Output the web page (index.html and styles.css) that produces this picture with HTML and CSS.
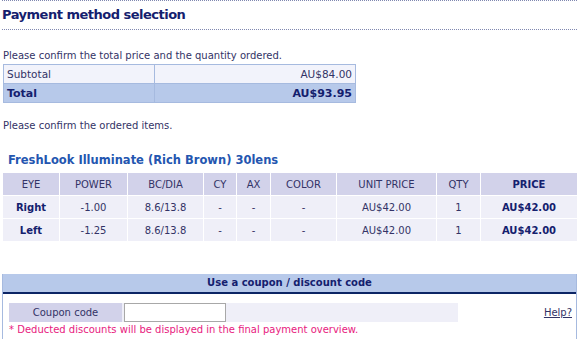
FILE: index.html
```html
<!DOCTYPE html>
<html lang="en">
<head>
    <meta charset="UTF-8">
    <title>Payment method selection</title>
    <link rel="stylesheet" href="styles.css">
</head>
<body>

    <h1 class="page-title">Payment method selection</h1>

    <p class="note">Please confirm the total price and the quantity ordered.</p>

    <table class="summary">
        <tr class="sub">
            <td class="label">Subtotal</td>
            <td class="amount">AU$84.00</td>
        </tr>
        <tr class="total">
            <td class="label">Total</td>
            <td class="amount">AU$93.95</td>
        </tr>
    </table>

    <p class="note second">Please confirm the ordered items.</p>

    <h2 class="product">FreshLook Illuminate (Rich Brown) 30lens</h2>

    <table class="items">
        <tr>
            <th class="c-eye">EYE</th>
            <th class="c-power">POWER</th>
            <th class="c-bc">BC/DIA</th>
            <th class="c-cy">CY</th>
            <th class="c-ax">AX</th>
            <th class="c-color">COLOR</th>
            <th class="c-unit">UNIT PRICE</th>
            <th class="c-qty">QTY</th>
            <th class="c-price strong">PRICE</th>
        </tr>
        <tr>
            <td class="strong">Right</td>
            <td>-1.00</td>
            <td>8.6/13.8</td>
            <td>-</td>
            <td>-</td>
            <td>-</td>
            <td>AU$42.00</td>
            <td>1</td>
            <td class="strong">AU$42.00</td>
        </tr>
        <tr>
            <td class="strong">Left</td>
            <td>-1.25</td>
            <td>8.6/13.8</td>
            <td>-</td>
            <td>-</td>
            <td>-</td>
            <td>AU$42.00</td>
            <td>1</td>
            <td class="strong">AU$42.00</td>
        </tr>
    </table>

    <div class="coupon">
        <div class="coupon-head">Use a coupon / discount code</div>
        <div class="coupon-body">
            <div class="coupon-row">
                <div class="coupon-label">Coupon code</div>
                <div class="coupon-field"><input type="text" class="coupon-input"></div>
                <div class="coupon-fill"></div>
                <a href="#" class="help">Help?</a>
            </div>
            <div class="coupon-note">* Deducted discounts will be displayed in the final payment overview.</div>
        </div>
    </div>

</body>
</html>
```

FILE: styles.css
```css
body {
    font-family: 'DejaVu Sans', Verdana, sans-serif;
    font-size: 10px;
    color: #333366;
    margin: 0;
    padding: 0 3px 0 2px;
    background: #ffffff;
}

.page-title {
    font-size: 13px;
    letter-spacing: -0.5px;
    font-weight: bold;
    color: #14206e;
    margin: 0;
    padding: 5px 0 5px 0;
    border-top: 1px dotted #8088b0;
    border-bottom: 1px dotted #8088b0;
    line-height: 18px;
}

.note {
    margin: 19px 0 1px 1px;
    line-height: 14px;
}

.note.second {
    margin-top: 16px;
}

.summary {
    border-collapse: collapse;
    width: 353px;
    margin-left: 1px;
}

.summary td {
    border: 1px solid #a6badf;
    height: 18px;
    padding: 0 3px;
    font-size: 11px;
}

.summary .label {
    width: 144px;
}

.summary .amount {
    text-align: right;
}

.summary .sub td {
    background: #f2f3fb;
    font-size: 10.5px;
}

.summary .total td {
    background: #b7c9ea;
    font-weight: bold;
    color: #14206e;
}

.product {
    font-size: 11.5px;
    font-weight: bold;
    color: #2456b0;
    margin: 19px 0 5px 6px;
    line-height: 16px;
}

.items {
    width: 576px;
    margin-left: 0;
    border-collapse: separate;
    border-spacing: 1px;
    margin-top: -1px;
}

.items th,
.items td {
    height: 22px;
    padding: 0;
    text-align: center;
    font-weight: normal;
}

.items th {
    background: #d2d2ea;
}

.items td {
    background: #efeff8;
}

.items .strong {
    font-weight: bold;
    color: #14206e;
}

.c-eye { width: 56px; }
.c-power { width: 67px; }
.c-bc { width: 75px; }
.c-cy { width: 32px; }
.c-ax { width: 33px; }
.c-color { width: 65px; }
.c-unit { width: 99px; }
.c-qty { width: 43px; }

.coupon {
    margin-top: 32px;
    width: 573px;
    margin-left: 0;
    border: 1px solid #a6badf;
    border-top: none;
}

.coupon-head {
    background: #b7c9ea;
    color: #14206e;
    font-weight: bold;
    text-align: center;
    line-height: 18px;
    border-bottom: 2px solid #0c2565;
}

.coupon-body {
    padding: 9px 4px 6px 6px;
}

.coupon-row {
    display: flex;
    align-items: stretch;
    height: 19px;
}

.coupon-label {
    width: 113px;
    background: #d2d2ea;
    text-align: center;
    line-height: 19px;
}

.coupon-field {
    background: #efeff8;
    padding-left: 2px;
}

.coupon-input {
    box-sizing: border-box;
    width: 102px;
    height: 19px;
    margin: 0;
    border: 1px solid #a8a8a8;
    background: #ffffff;
}

.coupon-fill {
    width: 232px;
    background: #efeff8;
}

.help {
    margin-left: auto;
    color: #333366;
    line-height: 19px;
}

.coupon-note {
    color: #e8207e;
    line-height: 14px;
    margin-top: 1px;
}
```
